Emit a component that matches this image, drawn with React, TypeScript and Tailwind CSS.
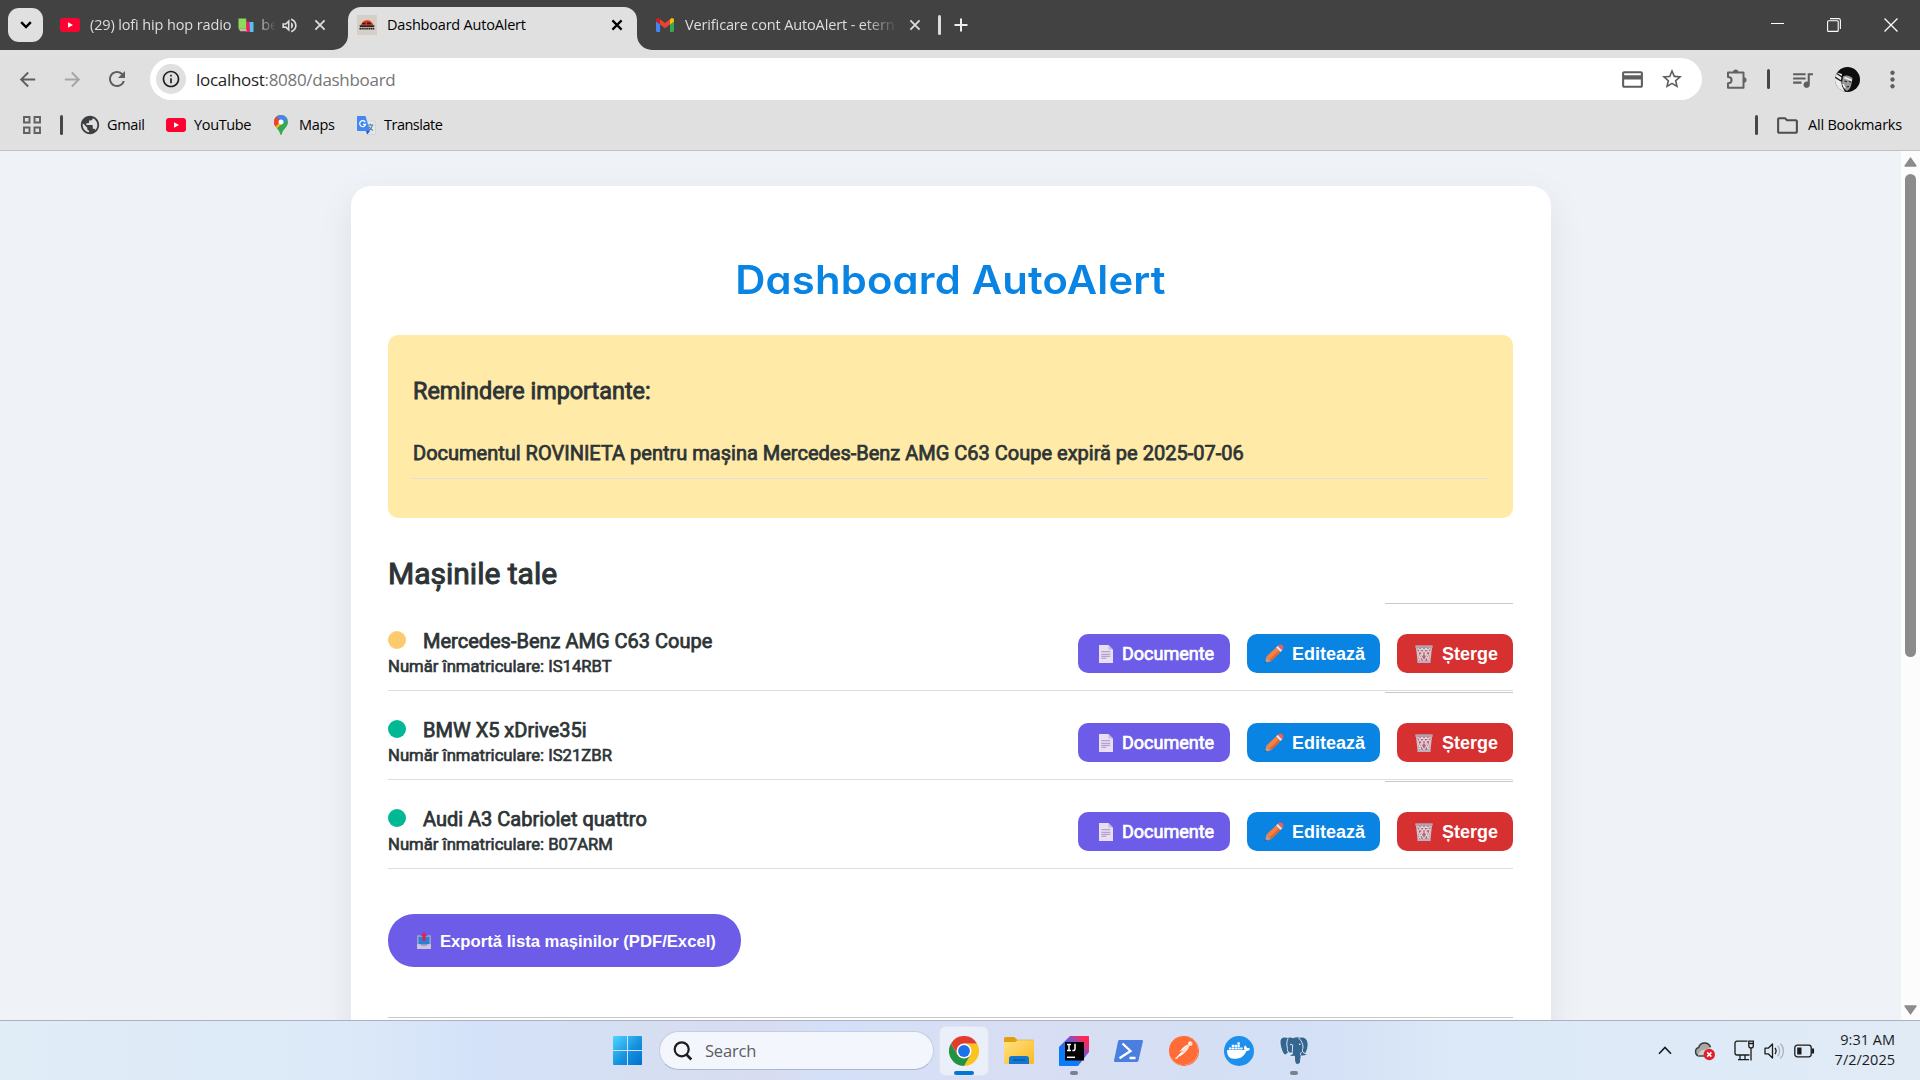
import type { ReactNode } from "react";
import {
  MdArrowBack,
  MdArrowForward,
  MdInfoOutline,
  MdMoreVert,
  MdOutlineCreditCard,
  MdOutlineFolder,
  MdOutlineVolumeUp,
  MdPublic,
  MdQueueMusic,
  MdRefresh,
  MdStarOutline,
} from "react-icons/md";
import { SiDocker, SiPostman } from "react-icons/si";

const cars = [
  { name: "Mercedes-Benz AMG C63 Coupe", plate: "IS14RBT", dot: "bg-[#fdcb6e]" },
  { name: "BMW X5 xDrive35i", plate: "IS21ZBR", dot: "bg-[#00b894]" },
  { name: "Audi A3 Cabriolet quattro", plate: "B07ARM", dot: "bg-[#00b894]" },
];

/* ---------- small drawings ---------- */

function YouTubeIcon() {
  return (
    <svg className="shrink-0" width="20" height="14" viewBox="0 0 20 14">
      <rect width="20" height="14" rx="3" fill="#ff0033" />
      <path d="M8 4.2v5.6L13 7z" fill="#fff" />
    </svg>
  );
}

function BooksIcon() {
  return (
    <svg className="shrink-0" width="16" height="15" viewBox="0 0 16 15">
      <path d="M11 4h4.5v10H11z" fill="#4fc3f7" />
      <path d="M7 3.500h4.500L12 14H8z" fill="#e91e63" />
      <path d="M.5.5h7.700v10.300H.5z" fill="#8bdc5a" />
      <path d="M1 10.800h7l1 2.500H2z" fill="#c9b8a8" />
    </svg>
  );
}

function CloseIcon({ bold = false }: { bold?: boolean }) {
  return (
    <svg width="12" height="12" viewBox="0 0 12 12" fill="none" stroke="currentColor" strokeWidth={bold ? 2.2 : 1.8}>
      <path d="M1.400 1.400l9.200 9.200M10.600 1.400l-9.200 9.200" />
    </svg>
  );
}

function Favicon() {
  return (
    <svg width="20" height="20" viewBox="0 0 20 20">
      <rect width="20" height="20" fill="#d6cfc8" />
      <path d="M3.500 10.500c.8-2.500 3-5 6-5.300 3.600-.3 6 1.800 7 5.300z" fill="#e0391a" />
      <path d="M6 7.800h2.500v1.500H5zM10 7.500h3l1.500 1.800H10z" fill="#331a16" />
      <path d="M2.500 10.200h15l-.5 1.800H3z" fill="#2b2220" />
      <path d="M2.500 13.600h15" stroke="#222" strokeWidth="1.800" strokeDasharray="1.500 .4" />
    </svg>
  );
}

function GmailIcon() {
  return (
    <svg width="18" height="14" viewBox="0 0 18 14">
      <path d="M0 2.500v10.300C0 13.500.5 14 1.200 14H4V5.500z" fill="#4285f4" />
      <path d="M14 5.500V14h2.800c.7 0 1.200-.5 1.200-1.200V2.500z" fill="#34a853" />
      <path d="M4 1.300l5 3.700 5-3.700v5.200l-5 3.700-5-3.700z" fill="#ea4335" />
      <path d="M0 2v1.500l4 3V1.300L2.900.5C1.600-.5 0 .4 0 2z" fill="#c5221f" />
      <path d="M18 2v1.500l-4 3V1.300l1.100-.8C16.400-.5 18 .4 18 2z" fill="#fbbc04" />
    </svg>
  );
}

function AppsIcon() {
  return (
    <svg width="18" height="18" viewBox="0 0 18 18" fill="none" stroke="#5f6163" strokeWidth="1.900">
      <path d="M1 1h5.500v5.500H1zM11.500 1H17v5.500h-5.500zM1 11.500h5.500V17H1zM11.500 11.500H17V17h-5.500z" />
    </svg>
  );
}

function MapsIcon() {
  return (
    <svg width="14" height="20" viewBox="0 0 14 20">
      <defs>
        <clipPath id="pin">
          <path d="M7 0a7 7 0 0 0-7 7c0 2 .8 3.500 1.900 5C3.800 14.400 5.500 16 6.200 19c.3 1.300 1.300 1.300 1.600 0 .7-3 2.400-4.600 4.300-7C13.200 10.500 14 9 14 7a7 7 0 0 0-7-7z" />
        </clipPath>
      </defs>
      <g clipPath="url(#pin)">
        <path d="M0 0h14v20H0z" fill="#34a853" />
        <path d="M0 0h14v3L0 16z" fill="#fbbc04" />
        <path d="M0 0h6l1 6-6 6H0z" fill="#ea4335" />
        <path d="M3 0h11v4L8.500 8.500 2 2.500z" fill="#4285f4" />
        <path d="M0 3l2-1.500L7 6 2.500 10.500 0 10z" fill="#ea4335" />
      </g>
      <circle cx="7" cy="6.900" r="2.500" fill="#fff" />
    </svg>
  );
}

function TranslateIcon() {
  return (
    <svg width="19" height="19" viewBox="0 0 19 19">
      <path d="M7 5h10.500c.6 0 1 .4 1 1v11.500c0 .6-.4 1-1 1H11z" fill="#e3e7ec" stroke="#c6ccd3" strokeWidth=".6" />
      <path d="M10.500 9h6M13.500 7.800V9M15.500 9.200c-.6 2.600-2.300 4.400-4 5.300M12 10.500c.8 2 2.300 3.300 4 4" stroke="#5d7f93" strokeWidth="1.100" fill="none" />
      <path d="M1 0h7.500L13 15H1c-.6 0-1-.4-1-1V1c0-.6.4-1 1-1z" fill="#4387f5" />
      <path d="M9 15h4l-2.800 3.500z" fill="#3452b8" />
      <path d="M8.300 6.100A3 3 0 1 0 8.600 8.300H6" stroke="#fff" strokeWidth="1.200" fill="none" />
    </svg>
  );
}

function PuzzleIcon() {
  return (
    <svg width="22" height="22" viewBox="0 0 22 22" fill="none" stroke="#606264" strokeWidth="2">
      <path d="M2 4.500h15.500v15.300H2v-4.500c2.200 0 3.600-1.300 3.600-3.200S4.200 9 2 9z" strokeLinejoin="round" />
      <path d="M7 4.200a2.700 2.700 0 0 1 5.400 0zM17.800 9.300a2.700 2.700 0 0 1 0 5.400z" fill="#606264" stroke="none" />
    </svg>
  );
}

function Avatar() {
  return (
    <svg width="25" height="25" viewBox="0 0 25 25">
      <defs>
        <clipPath id="face">
          <circle cx="12.500" cy="12.500" r="12.500" />
        </clipPath>
      </defs>
      <g clipPath="url(#face)">
        <path d="M0 0h25v25H0z" fill="#0d0d0d" />
        <path d="M0 5l7 2-1 6 1 6 3 6H0z" fill="#ececec" />
        <path d="M0 10l6 4M1 6l6 4" stroke="#222" strokeWidth="1.500" />
        <path d="M8 9.500c2.500-1.800 7-1 9.500 1.500l-1 5.500c-.5 3.500-2 6-4.500 7.500-3-1.500-5-5-5-8.500z" fill="#9a9a9a" />
        <path d="M9.500 10.500l7.500 3M8 17l2 4" stroke="#f2f2f2" strokeWidth="1.500" />
        <path d="M9.500 14l2.500.8M14 14.500l2 .5M11.500 20l2.500-.5" stroke="#222" strokeWidth="1.200" />
      </g>
    </svg>
  );
}

function PageIcon() {
  return (
    <svg width="14" height="18" viewBox="0 0 14 18">
      <path d="M0 0h9.500L14 4.500V18H0z" fill="#e8dff3" />
      <path d="M9.500 0L14 4.500H9.500z" fill="#c6b6dc" />
      <path d="M2.300 6.700h9M2.300 9.300h9M2.300 11.300h9M2.300 13.200h5" stroke="#a993c2" strokeWidth="1" />
    </svg>
  );
}

function PencilIcon() {
  return (
    <svg width="19" height="19" viewBox="0 0 19 19">
      <path d="M1.500 12.500L11 3.500l4.500 4.500-9.500 9.200z" fill="#f9803c" />
      <path d="M4.500 15.600l9.500-9.200 1.500 1.600-9.500 9.200z" fill="#e0642f" />
      <path d="M11 3.500l1.800-1.700 4.500 4.500L15.500 8z" fill="#e6dfe8" />
      <path d="M12.800 1.800C14.200.4 15.700 0 17.300 1.300c1.500 1.500 1.500 3.200 0 5z" fill="#fb5b4b" />
      <path d="M1.500 12.500L6 17.200l-4.500 1.300c-.8.200-1.300-.4-1.100-1.200z" fill="#c8977f" />
      <path d="M.4 17.300l1.300 1.300-1.500.3z" fill="#43333d" />
    </svg>
  );
}

function TrashIcon() {
  return (
    <svg width="18" height="18" viewBox="0 0 18 18">
      <path d="M2 2.500h14L14.500 17h-11z" fill="#c4606a" />
      <path
        d="M3 3l5 6-4 6M7 3l5.500 7L9 16M11 3l4 4.500-2.500 8M15 3l-5 6 4 6.500M11 3L5.500 10 9 16M7 3L3 8l3 8"
        stroke="#d9d3dc"
        strokeWidth="1.250"
        fill="none"
      />
      <path d="M.3.3h17.400v2.500H.3z" fill="#b0a7b6" />
      <path d="M2.400 15.800h13.200V18H2.400z" fill="#b9b0c0" />
      <path d="M1.800 2.600L3.300 16M16.200 2.600L14.700 16" stroke="#c9c2cd" strokeWidth="1.600" />
    </svg>
  );
}

function OutboxIcon() {
  return (
    <svg width="14" height="17" viewBox="0 0 14 17">
      <path d="M.8 4h12.400v9H.8z" fill="#2483d8" stroke="#a9a0c6" strokeWidth="1.500" />
      <path d="M0 12.300h3.500l1 1.500h5l1-1.500H14V17H0z" fill="#cfc3df" />
      <path d="M7 0l3.200 4H8.500v5h-3V4H3.800z" fill="#dc2350" />
    </svg>
  );
}

function WindowsLogo() {
  return (
    <svg width="29" height="29" viewBox="0 0 29 29">
      <defs>
        <linearGradient id="win" x1="0" y1="0" x2="1" y2="1">
          <stop offset="0" stopColor="#4fd6ff" />
          <stop offset=".55" stopColor="#1692e0" />
          <stop offset="1" stopColor="#0070cf" />
        </linearGradient>
      </defs>
      <path
        d="M1 0h13v14H0V1c0-.6.4-1 1-1zM15 0h13c.6 0 1 .4 1 1v13H15zM0 15h14v14H1c-.6 0-1-.4-1-1zM15 15h14v13c0 .6-.4 1-1 1H15z"
        fill="url(#win)"
      />
    </svg>
  );
}

function ChromeLogo() {
  return (
    <svg width="30" height="30" viewBox="0 0 48 48">
      <path d="M24 12h20.800A24 24 0 0 1 24 48l10.400-18z" fill="#fcc31e" />
      <path d="M3.200 12A24 24 0 0 0 24 48l10.400-18H24L13.600 30z" fill="#229342" />
      <path d="M3.200 12A24 24 0 0 1 44.800 12H24L13.600 30z" fill="#e33b2e" />
      <circle cx="24" cy="24" r="12" fill="#fff" />
      <circle cx="24" cy="24" r="9.500" fill="#1a73e8" />
    </svg>
  );
}

function ExplorerLogo() {
  return (
    <svg width="30" height="27" viewBox="0 0 30 27">
      <defs>
        <linearGradient id="folder" x1="0" y1="0" x2="1" y2="1">
          <stop offset="0" stopColor="#ffe285" />
          <stop offset="1" stopColor="#fbb91f" />
        </linearGradient>
      </defs>
      <path d="M0 1.500C0 .7.700 0 1.500 0h8.700l3 2.800H28.500C29.300 2.800 30 3.500 30 4.300V10H0z" fill="#e09f0b" />
      <path d="M0 5h11l2.500-1.800H30V25.500c0 .8-.7 1.500-1.500 1.500h-27C.7 27 0 26.300 0 25.500z" fill="url(#folder)" />
      <path d="M5 27v-5.500C5 20 6 19 7.500 19h15c1.500 0 2.500 1 2.500 2.500V27z" fill="#1478cf" />
      <path d="M9 23h12" stroke="#0b4f96" strokeWidth="1.200" />
    </svg>
  );
}

function IntelliJLogo() {
  return (
    <svg width="30" height="30" viewBox="0 0 30 30">
      <defs>
        <linearGradient id="ij" x1="0" y1="1" x2="1" y2="0">
          <stop offset=".3" stopColor="#087cfa" />
          <stop offset=".6" stopColor="#6b57d8" />
          <stop offset=".85" stopColor="#fe2857" />
        </linearGradient>
      </defs>
      <path d="M11 0h18c.6 0 1 .4 1 1v15L19 30H1c-.6 0-1-.4-1-1V11z" fill="url(#ij)" />
      <path d="M6 6h19v18.500H6z" fill="#000" />
      <path d="M8 8.500h4M10 8.500v6M8 14.500h4M16 7.800v5c0 1.400-1 1.900-2.600 1.700" stroke="#fff" strokeWidth="1.500" fill="none" />
      <path d="M8 21.300h8" stroke="#fff" strokeWidth="1.500" />
    </svg>
  );
}

function PowerShellLogo() {
  return (
    <svg width="29" height="22" viewBox="0 0 29 22">
      <path d="M5.500 0h22.300c.8 0 1.300.6 1.100 1.400l-4.400 19.200c-.2.800-.9 1.400-1.700 1.400H1.100c-.8 0-1.300-.6-1.100-1.400L4 1.400C4.100.6 4.800 0 5.500 0z" fill="#4a7fe0" />
      <path d="M8.500 3.500L16.500 11 5.500 18.300M15.500 18h6" stroke="#fff" strokeWidth="2.300" fill="none" />
    </svg>
  );
}

function PostgresLogo() {
  return (
    <svg width="29" height="30" viewBox="0 0 29 30">
      <path
        d="M8.500 1.500C5 .3 1 1.300 1 6c0 4 2 10.500 4.200 12.500 1 .9 2 .3 3-1l1.300-1.300c1 1 2.500 1 3.500.8l.5 1c-1.500.4-3 .8-2.500 1.800.7 1 3 .8 4.300.3.300 2.500 0 5.500 1.200 7.400 1 1.500 4.500 1 5-1.500l.7-6c2 .2 4.800-.4 5.800-1.500.5-.8-.4-1.200-1.500-1 1.800-3 3-7 2.500-10.500C28.300 2 24.500.2 20.500 1.300c-2-.7-4.500-.6-6.200.4-1.800-.8-4-.9-5.800-.2z"
        fill="#336791"
        stroke="#eef1f6"
        strokeWidth=".9"
      />
      <path
        d="M9 2.500c-1.500 3-1.300 6-.8 8.500.3 2-.2 3.700 1.300 5.200M19.500 2c3 2.500 4.500 6 4.500 9-.2 2-1 3.500-.3 5l2.800 1.800M13 17c.8-2.500.3-5 .7-8.500M22 19.500c-.8-1-.7-2.300.3-3.300"
        fill="none"
        stroke="#eef1f6"
        strokeWidth=".9"
      />
      <circle cx="12" cy="8.500" r=".8" fill="#fff" />
      <circle cx="20.800" cy="8.300" r=".8" fill="#fff" />
    </svg>
  );
}

function Divider({ light = false }: { light?: boolean }) {
  return <div className={light ? "h-5 w-[3px] rounded-full bg-[#dcdcdc]" : "h-5 w-[3px] rounded-full bg-[#474747]"} />;
}

/* ---------- browser chrome ---------- */

function TabStrip() {
  return (
    <div className="flex h-[50px] items-center bg-[#424242] text-[14.5px] leading-5 tracking-[-0.13px] text-[#dedede]">
      <button className="ml-2 flex h-[34px] w-[35px] items-center justify-center rounded-[11px] bg-[#e0e0e0]">
        <svg width="12" height="8" viewBox="0 0 12 8" fill="none" stroke="#000" strokeWidth="2.400">
          <path d="M1.200 1.200L6 6l4.800-4.800" />
        </svg>
      </button>

      <div className="flex w-[305px] items-center pl-[17px]">
        <YouTubeIcon />
        <div className="ml-[10px] flex w-[190px] items-center gap-[7px] whitespace-pre [mask-image:linear-gradient(to_right,#000_88%,transparent_98%)]">
          <span>(29) lofi hip hop radio</span>
          <BooksIcon />
          <span>be</span>
        </div>
        <MdOutlineVolumeUp size={19} />
        <span className="ml-[15px]">
          <CloseIcon />
        </span>
      </div>

      <div className="relative flex h-[43px] w-[289px] items-center self-end rounded-t-[13px] bg-[#e0e0e0] pb-[7px] text-black">
        <svg className="absolute bottom-0 -left-[15px]" width="15" height="15" viewBox="0 0 15 15">
          <path d="M15 0v15H0A15 15 0 0 0 15 0z" fill="#e0e0e0" />
        </svg>
        <svg className="absolute -right-[15px] bottom-0" width="15" height="15" viewBox="0 0 15 15">
          <path d="M0 0v15h15A15 15 0 0 1 0 0z" fill="#e0e0e0" />
        </svg>
        <span className="ml-[9px]">
          <Favicon />
        </span>
        <span className="ml-[10px] w-[224px] tracking-[-0.2px]">Dashboard AutoAlert</span>
        <CloseIcon bold />
      </div>

      <div className="flex items-center pl-[19px]">
        <GmailIcon />
        <span className="ml-[11px] w-[213px] whitespace-pre [mask-image:linear-gradient(to_right,#000_84%,transparent)]">
          Verificare cont AutoAlert - etern
        </span>
        <span className="ml-[11px] mr-[17px]">
          <CloseIcon />
        </span>
        <Divider light />
        <svg className="ml-[13px]" width="14" height="14" viewBox="0 0 14 14" stroke="#eee" strokeWidth="2">
          <path d="M7 .5v13M.5 7h13" />
        </svg>
      </div>

      <div className="ml-auto mr-[22px] flex items-center gap-[43px]">
        <svg width="13" height="14" viewBox="0 0 13 14" stroke="#fff">
          <path d="M0 5.500h13" />
        </svg>
        <svg width="14" height="14" viewBox="0 0 14 14" fill="none" stroke="#fff" strokeWidth="1.100">
          <rect x=".6" y="2.800" width="10.600" height="10.600" rx="1" />
          <path d="M3 .6h8.500c1 0 1.900.9 1.900 1.900V11" />
        </svg>
        <svg width="14" height="14" viewBox="0 0 14 14" stroke="#fff" strokeWidth="1.300">
          <path d="M.5.5l13 13M13.500.5l-13 13" />
        </svg>
      </div>
    </div>
  );
}

function Toolbar() {
  return (
    <div className="flex h-[58px] items-center pl-4 text-[#5c5e60]">
      <MdArrowBack size={23} />
      <MdArrowForward className="ml-[22px] text-[#a5a5a5]" size={23} />
      <MdRefresh className="ml-[21px]" size={24} />
      <div className="ml-[21px] flex h-[42px] w-[1552px] items-center rounded-full bg-white pl-[6px]">
        <div className="flex size-[30px] items-center justify-center rounded-full bg-[#e0e0e0]">
          <MdInfoOutline className="text-[#1f1f1f]" size={20} />
        </div>
        <div className="ml-[10px] pt-px text-[17px] leading-6 tracking-[-0.3px] text-[#757575]">
          <span className="text-[#1f1f1f]">localhost</span>:8080/dashboard
        </div>
        <MdOutlineCreditCard className="ml-auto" size={25} />
        <MdStarOutline className="ml-[15px] mr-[18px]" size={24} />
      </div>
      <div className="ml-[24px]">
        <PuzzleIcon />
      </div>
      <div className="ml-[19px]">
        <Divider />
      </div>
      <MdQueueMusic className="ml-[20px]" size={25} />
      <div className="ml-[20px]">
        <Avatar />
      </div>
      <MdMoreVert className="ml-[19px]" size={27} />
    </div>
  );
}

function Bookmark({ className, icon, label }: { className: string; icon: ReactNode; label: string }) {
  return (
    <div className={className}>
      {icon}
      <span>{label}</span>
    </div>
  );
}

function BookmarksBar() {
  return (
    <div className="flex h-[43px] items-center border-b border-[#c2c2c2] pb-[8px] pl-[23px] text-[14.5px] leading-5 tracking-[-0.35px] text-black">
      <AppsIcon />
      <div className="ml-[19px]">
        <Divider />
      </div>
      <Bookmark
        className="ml-4 flex w-[87px] items-center gap-[6px]"
        icon={<MdPublic className="text-[#3c4043]" size={22} />}
        label="Gmail"
      />
      <Bookmark className="flex w-[108px] items-center gap-2" icon={<YouTubeIcon />} label="YouTube" />
      <Bookmark className="flex w-[83px] items-center gap-[11px]" icon={<MapsIcon />} label="Maps" />
      <Bookmark className="flex items-center gap-[8px] tracking-[-0.5px]" icon={<TranslateIcon />} label="Translate" />
      <div className="ml-auto">
        <Divider />
      </div>
      <Bookmark
        className="ml-[17px] mr-[18px] flex items-center gap-2 tracking-[-0.2px]"
        icon={<MdOutlineFolder className="text-[#4c4e50]" size={25} />}
        label="All Bookmarks"
      />
    </div>
  );
}

function Scrollbar() {
  return (
    <div className="flex h-full w-[19px] flex-col items-center bg-[#fcfcfc] pt-[6px]">
      <svg width="13" height="10" viewBox="0 0 13 10">
        <path d="M6.500 0L12.500 8.500c.2.800 0 1.200-.8 1.200H1.300C.5 9.700.3 9.300.5 8.500z" fill="#8b8b8b" />
      </svg>
      <div className="mt-[7px] h-[483px] w-[11px] rounded-full bg-[#8b8b8b]" />
      <svg className="mb-[5px] mt-auto" width="13" height="10" viewBox="0 0 13 10">
        <path d="M6.500 10L.5 1.500C.3.700.5.300 1.300.300h10.400c.8 0 1 .4.8 1.200z" fill="#8b8b8b" />
      </svg>
    </div>
  );
}

/* ---------- page ---------- */

function CarRow({ car }: { car: (typeof cars)[number] }) {
  return (
    <div className="flex h-[89px] justify-between border-b border-[#dddddd]">
      <div className="pt-[26px]">
        <div className="flex h-[26px] items-center">
          <span className={`mb-[3px] mr-[17px] size-[18px] rounded-full ${car.dot}`} />
          <span className="text-[20px] leading-[26px] [-webkit-text-stroke:0.75px_#2d3436]">{car.name}</span>
        </div>
        <div className="mt-px text-[16.67px] leading-6 [-webkit-text-stroke:0.65px_#2d3436]">
          Număr înmatriculare: {car.plate}
        </div>
      </div>
      <div className="flex pt-[32px] text-white">
        <button className="flex h-[39px] w-[152px] items-center rounded-[10px] bg-[#6c5ce7] pl-[21px] text-[18px] [-webkit-text-stroke:0.7px_#fff]">
          <PageIcon />
          <span className="ml-[9px]">Documente</span>
        </button>
        <button className="ml-[17px] flex h-[39px] w-[133px] items-center rounded-[10px] bg-[#0984e3] pl-[18px] font-['Liberation_Sans',sans-serif] text-[18px] font-bold">
          <PencilIcon />
          <span className="ml-[8px] pt-[2px]">Editează</span>
        </button>
        <div className="relative -mt-[32px] ml-[5px] w-[128px] pl-3 pt-[32px]">
          <div className="absolute inset-x-0 top-px h-px bg-[#c8c8c8]" />
          <button className="flex h-[39px] w-[116px] items-center rounded-[10px] bg-[#d63031] pl-[18px] font-['Liberation_Sans',sans-serif] text-[18px] font-bold">
            <TrashIcon />
            <span className="ml-[9px] pt-[2px]">Șterge</span>
          </button>
        </div>
      </div>
    </div>
  );
}

function Dashboard() {
  return (
    <main className="h-full flex-1 overflow-hidden bg-[#eff2f7] pt-[35px] font-['Roboto',sans-serif] text-[#2d3436]">
      <div className="ml-[351px] h-[1100px] w-[1200px] rounded-[20px] bg-white pl-[37px] pr-[38px] pt-[64px] shadow-[0_12px_37px_rgba(0,0,0,0.08)]">
        <h1 className="h-[60px] scale-x-[1.07] text-center font-['Inter',sans-serif] text-[39px] font-semibold leading-[60px] tracking-[0.2px] text-[#0984e3] [font-feature-settings:'cv11']">
          Dashboard AutoAlert
        </h1>

        <section className="mt-[25px] h-[183px] rounded-[10px] bg-[#ffeaa7] px-[25px] pt-[42px]">
          <h3 className="text-[23.4px] leading-[28px] [-webkit-text-stroke:0.85px_#2d3436]">Remindere importante:</h3>
          <p className="mt-[27px] h-[47px] border-b border-[#dadde2] pt-[8px] text-[20px] leading-[26px] [-webkit-text-stroke:0.75px_#2d3436]">
            Documentul ROVINIETA pentru mașina Mercedes-Benz AMG C63 Coupe expiră pe 2025-07-06
          </p>
        </section>

        <h2 className="mt-[38px] text-[30px] leading-[36px] [-webkit-text-stroke:1px_#2d3436]">Mașinile tale</h2>

        <div className="mt-[10px]">
          {cars.map((car) => (
            <CarRow key={car.plate} car={car} />
          ))}
        </div>

        <button className="mt-[45px] flex h-[53px] w-[353px] items-center rounded-[26px] bg-[#6c5ce7] pl-[29px] font-['Liberation_Sans',sans-serif] text-[16.67px] font-bold text-white">
          <OutboxIcon />
          <span className="ml-[9px] whitespace-nowrap pt-[2px]">Exportă lista mașinilor (PDF/Excel)</span>
        </button>

        <hr className="mt-[50px] border-[#c8c8c8]" />
      </div>
    </main>
  );
}

/* ---------- taskbar ---------- */

function TaskbarApp({ children, running = false }: { children: ReactNode; running?: boolean }) {
  return (
    <div className="relative flex h-12 w-[55px] items-center justify-center">
      {children}
      {running && <div className="absolute bottom-0 h-1 w-2 rounded-full bg-[#7c808a]" />}
    </div>
  );
}

function Taskbar() {
  return (
    <footer className="flex h-[60px] items-center border-t border-[#aab2bf] bg-[linear-gradient(90deg,#e0ecf6_0%,#dce9f8_18%,#d4e2f9_25%,#d6dff2_33%,#d8dcf0_40%,#d4e0f8_43%,#d8def3_53%,#d6dff3_60%,#d3e0f6_68%,#dce9f8_76%,#e0ebf6_100%)]">
      <div className="ml-[613px]">
        <WindowsLogo />
      </div>
      <div className="ml-[17px] flex h-[39px] w-[275px] items-center rounded-full border border-[#c3cee2] border-b-[#aab7cf] bg-[#f3f6fd] pl-[13px]">
        <svg width="20" height="20" viewBox="0 0 20 20" fill="none" stroke="#1d1d1d" strokeWidth="2.200">
          <circle cx="8.700" cy="8.300" r="7" />
          <path d="M13.300 13.300l5 5.200" strokeWidth="2.600" />
        </svg>
        <span className="ml-[12px] text-[16.5px] leading-6 tracking-[-0.2px] text-[#5d5d60]">Search</span>
      </div>
      <div className="relative ml-[6px] mr-[3px] flex size-12 items-center justify-center rounded-[5px] bg-[#ebeff9] outline outline-[#dfe4f0]">
        <ChromeLogo />
        <div className="absolute bottom-0 h-1 w-5 rounded-full bg-[#0078d4]" />
      </div>
      <TaskbarApp>
        <ExplorerLogo />
      </TaskbarApp>
      <TaskbarApp running>
        <IntelliJLogo />
      </TaskbarApp>
      <TaskbarApp>
        <PowerShellLogo />
      </TaskbarApp>
      <TaskbarApp>
        <div className="flex size-[30px] items-center justify-center rounded-full bg-[#ff6c37]">
          <div className="rounded-full bg-white">
            <SiPostman className="text-[#ff6c37]" size={29} />
          </div>
        </div>
      </TaskbarApp>
      <TaskbarApp>
        <div className="flex size-[30px] items-center justify-center rounded-full bg-[#1d8fed]">
          <SiDocker className="text-white" size={23} />
        </div>
      </TaskbarApp>
      <TaskbarApp running>
        <PostgresLogo />
      </TaskbarApp>

      <div className="ml-auto mr-[25px] flex items-center text-[#1b1b1b]">
        <svg width="14" height="9" viewBox="0 0 14 9" fill="none" stroke="currentColor" strokeWidth="1.600">
          <path d="M1 7.800L7 1.500l6 6.300" />
        </svg>
        <svg className="ml-[22px]" width="22" height="20" viewBox="0 0 22 20">
          <path d="M5 15a4.400 4.400 0 0 1-.3-8.500C5.500 3.500 8 2 10.700 2c3 0 5 1.800 5.800 4.300" fill="#a8a8a8" stroke="#3a3a3a" strokeWidth="1.400" />
          <path d="M4 14.500c1-4 5-6.500 8-5.500l3-2.500 2 1.500-5 7z" fill="#cfcfcf" />
          <path d="M5 15h6" stroke="#3a3a3a" strokeWidth="1.400" />
          <circle cx="15.300" cy="13.500" r="5.700" fill="#e1202c" />
          <path d="M13.200 11.400l4.200 4.200M17.400 11.400l-4.200 4.200" stroke="#fff" strokeWidth="1.500" />
        </svg>
        <svg className="ml-[18px]" width="21" height="21" viewBox="0 0 21 21" fill="none" stroke="currentColor" strokeWidth="1.300">
          <path d="M13.500 1.200H3C1.900 1.200 1 2 1 3v10c0 1 .9 2 2 2h12.500M6 15.200v4M11 15.200v4M4 19.600h11" />
          <path d="M14.800 1.200h4.500v4.500a2.200 2.200 0 0 1-4.500 0zM14.800 3.500h4.500M17 8v12.500" />
        </svg>
        <svg className="ml-[9px]" width="21" height="18" viewBox="0 0 21 18" fill="none" stroke="currentColor" strokeWidth="1.300">
          <path d="M1 6.200h3.200L8.500 2v14l-4.300-4.200H1z" strokeLinejoin="round" />
          <path d="M11 6c1.300 1.800 1.300 4.200 0 6" />
          <path d="M13.700 3.800c2.700 3 2.700 7.400 0 10.400M16.500 1.500c4 4.500 4 10.500 0 15" stroke="#aab2ba" />
        </svg>
        <svg className="ml-[9px]" width="21" height="14" viewBox="0 0 21 14" fill="none" stroke="currentColor" strokeWidth="1.300">
          <rect x=".8" y="1.200" width="16.400" height="11.600" rx="2.500" />
          <path d="M3.200 3.500h4.300v7H3.200z" fill="currentColor" stroke="none" />
          <path d="M18.800 4.500v5" strokeWidth="2.500" />
        </svg>
        <div className="ml-[20px] pb-px text-right text-[14.5px] leading-5">
          <div>9:31 AM</div>
          <div>7/2/2025</div>
        </div>
      </div>
    </footer>
  );
}

export default function App() {
  return (
    <div className="flex h-[1080px] w-[1920px] flex-col overflow-hidden font-['Open_Sans',sans-serif]">
      <header className="bg-[#e0e0e0]">
        <TabStrip />
        <Toolbar />
        <BookmarksBar />
      </header>
      <div className="flex h-[869px] overflow-hidden">
        <Dashboard />
        <Scrollbar />
      </div>
      <Taskbar />
    </div>
  );
}
